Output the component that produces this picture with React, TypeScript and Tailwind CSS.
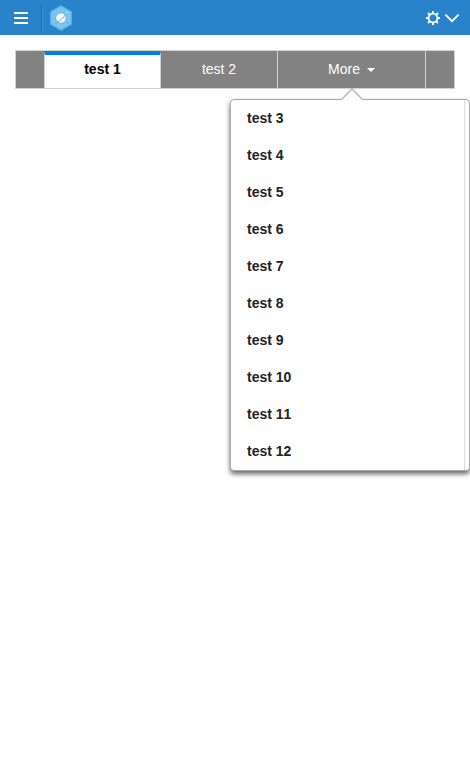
const menuItems = [3, 4, 5, 6, 7, 8, 9, 10, 11, 12].map((n) => `test ${n}`);

function Logo() {
  return (
    <svg className="ml-[6px] h-[26px] w-6" viewBox="0 0 24 26" fill="none">
      <path d="M12 .8 22.4 6.7v12.6L12 25.2 1.6 19.3V6.7z" fill="#7bc4ee" stroke="#4bb1ea" strokeWidth="1.2" strokeLinejoin="round" />
      <circle cx="12" cy="13" r="5.3" fill="#f3f5f6" stroke="#5aa6d2" strokeWidth=".8" />
      <path d="M6.2 18.2C8.6 18.4 19 9 17.8 7.2" stroke="#6fa9ca" strokeWidth="1" />
      <circle cx="17.8" cy="7.4" r="1.5" fill="#c2e3f5" stroke="#5babd8" strokeWidth=".6" />
      <circle cx="5.3" cy="9" r=".6" fill="#4ba3d5" />
      <circle cx="18.5" cy="18.3" r=".7" fill="#4ba3d5" />
    </svg>
  );
}

function Header() {
  return (
    <header className="flex h-[35px] items-center bg-[#2983cb]">
      <button className="ml-3.5 flex w-3.5 flex-col gap-[3px]" aria-label="Menu">
        <span className="h-0.5 w-full bg-white" />
        <span className="h-0.5 w-full bg-white" />
        <span className="h-0.5 w-full bg-white" />
      </button>
      <span className="ml-[13px] h-7 w-0.5 border-r border-[#3b90d3] bg-[#1d6cad]" />
      <Logo />
      <div className="mr-2.5 ml-auto flex items-center gap-[3px]">
        <svg className="h-4 w-4" viewBox="0 0 16 16" fill="none" stroke="white">
          <circle cx="8" cy="8" r="4.4" strokeWidth="1.8" />
          <path d="M8 1v2.5M8 12.5V15M1 8h2.5M12.5 8H15M3 3l1.6 1.6M11.4 11.4 13 13M3 13l1.6-1.6M11.4 4.6 13 3" strokeWidth="2" />
        </svg>
        <svg className="h-4 w-4" viewBox="0 0 16 16" fill="none" stroke="white" strokeWidth="1.8">
          <path d="m1.4 4.6 6.6 6.6 6.6-6.6" />
        </svg>
      </div>
    </header>
  );
}

function MoreMenu() {
  return (
    <div className="absolute top-[49px] left-[215px] h-[372px] w-[240px] rounded-[4px] border border-[#aaa] bg-white shadow-[0_3px_5px_rgba(0,0,0,0.6)]">
      <svg className="absolute -top-3 left-[109px] h-3 w-6" viewBox="0 0 24 12">
        <path d="M1 12 12 1l11 11z" fill="white" />
        <path d="M1.5 11.5 12 1l10.5 10.5" fill="none" stroke="#b3b3b3" strokeWidth="1.3" />
      </svg>
      <ul className="mr-1 border-r border-[#ddd] text-[14px] font-bold text-[#222] [font-kerning:none]">
        {menuItems.map((item) => (
          <li key={item} className="flex h-[37px] items-center pl-4">
            {item}
          </li>
        ))}
      </ul>
    </div>
  );
}

export default function App() {
  return (
    <div className="h-[768px] w-[470px] overflow-hidden bg-white font-['Liberation_Sans',Arial,sans-serif] text-[14px]">
      <Header />
      <div className="relative mx-[15px] mt-[15px]">
        <nav className="flex h-[39px] border border-[#d2d2d2] bg-[#828282] text-white">
          <div className="w-7" />
          <div className="flex w-[117px] items-center justify-center border-x border-t-4 border-x-[#d2d2d2] border-t-[#0080e0] bg-white pb-1 font-bold text-black">
            test 1
          </div>
          <div className="flex w-[117px] items-center justify-center border-r border-[#d2d2d2]">test 2</div>
          <div className="flex w-[148px] items-center justify-center border-r border-[#d2d2d2]">
            More
            <svg className="ml-[7px] h-1 w-2" viewBox="0 0 8 4" fill="white">
              <path d="M0 0h8L4 4z" />
            </svg>
          </div>
        </nav>
        <MoreMenu />
      </div>
    </div>
  );
}
